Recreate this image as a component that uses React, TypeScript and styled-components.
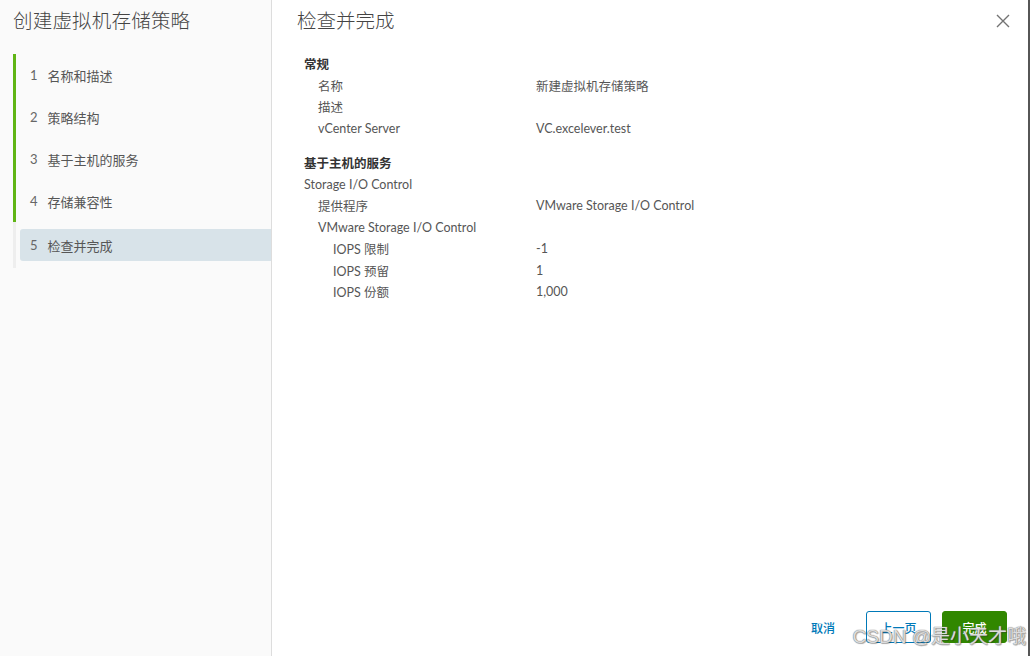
import styled, { createGlobalStyle } from "styled-components";

const GlobalStyle = createGlobalStyle`
  body {
    margin: 0;
    font-family: Lato, "Noto Sans", "Noto Sans CJK SC", sans-serif;
    background: #fff;
  }
`;

const steps = [
  { no: 1, label: "名称和描述", done: true },
  { no: 2, label: "策略结构", done: true },
  { no: 3, label: "基于主机的服务", done: true },
  { no: 4, label: "存储兼容性", done: true },
  { no: 5, label: "检查并完成", done: false },
];

type Row = { label: string; value?: string; level: number; heading?: boolean; gap?: boolean };

const rows: Row[] = [
  { label: "常规", level: 0, heading: true },
  { label: "名称", value: "新建虚拟机存储策略", level: 1 },
  { label: "描述", level: 1 },
  { label: "vCenter Server", value: "VC.excelever.test", level: 1 },
  { label: "基于主机的服务", level: 0, heading: true, gap: true },
  { label: "Storage I/O Control", level: 0 },
  { label: "提供程序", value: "VMware Storage I/O Control", level: 1 },
  { label: "VMware Storage I/O Control", level: 1 },
  { label: "IOPS 限制", value: "-1", level: 2 },
  { label: "IOPS 预留", value: "1", level: 2 },
  { label: "IOPS 份额", value: "1,000", level: 2 },
];

const App = () => {
  return (
    <>
      <GlobalStyle />
      <Frame>
        <Sidebar>
          <SideTitle>创建虚拟机存储策略</SideTitle>
          <StepList>
            {steps.map((s) => (
              <StepItem key={s.no} $done={s.done}>
                <StepInner $active={!s.done}>
                  <StepNo>{s.no}</StepNo>
                  <span>{s.label}</span>
                </StepInner>
              </StepItem>
            ))}
          </StepList>
        </Sidebar>
        <Main>
          <Header>
            <MainTitle>检查并完成</MainTitle>
            <CloseButton aria-label="close">
              <svg width="14" height="14" viewBox="0 0 14 14">
                <path d="M1 1 L13 13 M13 1 L1 13" stroke="#737373" strokeWidth="1.4" fill="none" />
              </svg>
            </CloseButton>
          </Header>
          <Body>
            {rows.map((r, i) => (
              <DataRow key={i} $gap={!!r.gap}>
                <Label $level={r.level} $heading={!!r.heading}>
                  {r.label}
                </Label>
                <Value>{r.value}</Value>
              </DataRow>
            ))}
          </Body>
          <Footer>
            <LinkButton>取消</LinkButton>
            <OutlineButton>上一页</OutlineButton>
            <PrimaryButton>完成</PrimaryButton>
          </Footer>
          <Watermark>CSDN @是小天才哦</Watermark>
        </Main>
      </Frame>
    </>
  );
};

export default App;

const Frame = styled.div`
  display: flex;
  width: 1030px;
  height: 656px;
  box-sizing: border-box;
  border-right: 2px solid #565656;
  overflow: hidden;
`;

const Sidebar = styled.div`
  width: 271px;
  flex-shrink: 0;
  background: #fafafa;
  border-right: 1px solid #dddddd;
  display: flex;
  flex-direction: column;
`;

const SideTitle = styled.div`
  padding: 9px 0 0 13px;
  height: 54px;
  box-sizing: border-box;
  font-size: 19.5px;
  line-height: 24px;
  color: #444;
  font-weight: 300;
  letter-spacing: 0.2px;
`;

const StepList = styled.div`
  display: flex;
  flex-direction: column;
  padding-left: 13px;
`;

const StepItem = styled.div<{ $done: boolean }>`
  border-left: 3px solid ${(p) => (p.$done ? "#60b515" : "#eeeeee")};
  padding: ${(p) => (p.$done ? "5px" : "7px")} 0 ${(p) => (p.$done ? "5px" : "7px")} 4px;
`;

const StepInner = styled.div<{ $active: boolean }>`
  height: 32px;
  display: flex;
  align-items: center;
  padding-left: 10px;
  font-size: 13px;
  color: #565656;
  background: ${(p) => (p.$active ? "#d8e3e9" : "transparent")};
  border-radius: 3px 0 0 3px;
`;

const StepNo = styled.span`
  margin-right: 10px;
  color: #666;
`;

const Main = styled.div`
  flex: 1;
  position: relative;
  display: flex;
  flex-direction: column;
  background: #fff;
`;

const Header = styled.div`
  display: flex;
  align-items: flex-start;
  justify-content: space-between;
  padding: 9px 18px 0 25px;
  height: 45px;
  box-sizing: border-box;
`;

const MainTitle = styled.div`
  font-size: 19.5px;
  line-height: 24px;
  color: #444;
  font-weight: 300;
`;

const CloseButton = styled.button`
  border: none;
  background: none;
  padding: 0;
  width: 14px;
  height: 14px;
  display: flex;
  margin-top: 5px;
  cursor: pointer;
`;

const Body = styled.div`
  flex: 1;
  padding: 8px 0 0 32px;
  display: flex;
  flex-direction: column;
`;

const DataRow = styled.div<{ $gap: boolean }>`
  display: grid;
  grid-template-columns: 232px 1fr;
  height: 21.45px;
  align-items: center;
  margin-top: ${(p) => (p.$gap ? "13.5px" : "0")};
  font-size: 12.5px;
  color: #565656;
`;

const Label = styled.div<{ $level: number; $heading: boolean }>`
  padding-left: ${(p) => [0, 14, 29][p.$level]}px;
  font-weight: ${(p) => (p.$heading ? 700 : 400)};
  color: ${(p) => (p.$heading ? "#333" : "#565656")};
`;

const Value = styled.div``;

const Footer = styled.div`
  display: flex;
  justify-content: flex-end;
  align-items: center;
  gap: 11px;
  padding: 0 21px 13px 0;
`;

const BaseButton = styled.button`
  height: 32px;
  min-width: 65px;
  box-sizing: border-box;
  border-radius: 3px;
  font-family: inherit;
  font-size: 12px;
  font-weight: 500;
  cursor: pointer;
`;

const LinkButton = styled(BaseButton)`
  background: none;
  border: none;
  color: #0079b8;
  min-width: 0;
  padding: 0 20px 0 0;
`;

const OutlineButton = styled(BaseButton)`
  background: #fff;
  border: 1px solid #0079b8;
  color: #0079b8;
`;

const PrimaryButton = styled(BaseButton)`
  background: #318700;
  border: 1px solid #318700;
  color: #fff;
`;

const Watermark = styled.div`
  position: absolute;
  right: 2px;
  bottom: 8px;
  font-size: 19px;
  color: rgba(255, 255, 255, 0.75);
  text-shadow: 0 0 1px #777, 0 0 1px #777, 1px 1px 1px rgba(0, 0, 0, 0.3);
  pointer-events: none;
  font-family: "Liberation Sans", "Noto Sans CJK SC", sans-serif;
`;
